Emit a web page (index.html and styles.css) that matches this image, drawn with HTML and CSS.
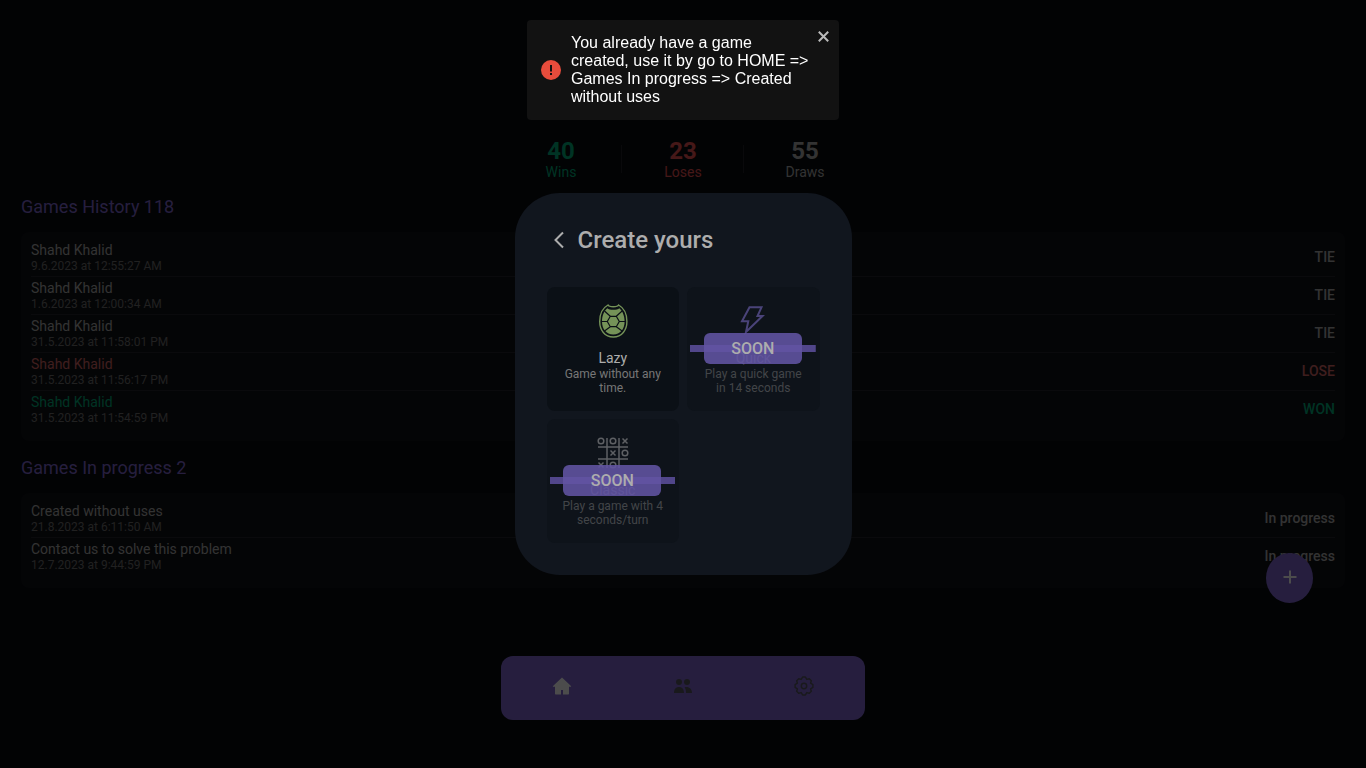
FILE: index.html
```html
<!DOCTYPE html>
<html lang="en">
<head>
<meta charset="utf-8">
<meta name="viewport" content="width=device-width, initial-scale=1">
<title>Home</title>
<link rel="stylesheet" href="styles.css">
</head>
<body>
<main class="page">
<div class="stats">
<div class="stat win"><strong class="stat-value">40</strong><span>Wins</span></div>
<div class="stat lose"><strong class="stat-value">23</strong><span>Loses</span></div>
<div class="stat"><strong class="stat-value">55</strong><span>Draws</span></div>
</div>

<h2 class="section-title">Games History 118</h2>
<ul class="games">
<li class="game"><div><p class="game-name">Shahd Khalid</p><p class="game-date">9.6.2023 at 12:55:27 AM</p></div><span class="game-status">TIE</span></li>
<li class="game"><div><p class="game-name">Shahd Khalid</p><p class="game-date">1.6.2023 at 12:00:34 AM</p></div><span class="game-status">TIE</span></li>
<li class="game"><div><p class="game-name">Shahd Khalid</p><p class="game-date">31.5.2023 at 11:58:01 PM</p></div><span class="game-status">TIE</span></li>
<li class="game lose"><div><p class="game-name">Shahd Khalid</p><p class="game-date">31.5.2023 at 11:56:17 PM</p></div><span class="game-status">LOSE</span></li>
<li class="game win"><div><p class="game-name">Shahd Khalid</p><p class="game-date">31.5.2023 at 11:54:59 PM</p></div><span class="game-status">WON</span></li>
</ul>

<h2 class="section-title">Games In progress 2</h2>
<ul class="games">
<li class="game"><div><p class="game-name">Created without uses</p><p class="game-date">21.8.2023 at 6:11:50 AM</p></div><span class="game-status">In progress</span></li>
<li class="game"><div><p class="game-name">Contact us to solve this problem</p><p class="game-date">12.7.2023 at 9:44:59 PM</p></div><span class="game-status">In progress</span></li>
</ul>
</main>

<button class="add-button" type="button" aria-label="New game">
<svg width="14" height="14" viewBox="0 0 14 14"><path d="M7 .500v13M.500 7h13" stroke="currentColor" stroke-width="2"/></svg>
</button>

<nav class="navbar">
<a class="nav-link active" href="#home" aria-label="Home">
<svg width="24" height="24" viewBox="0 0 24 24" fill="currentColor"><path d="M12 3.5l9 8.4c.3.4.1.9-.4.9H19v7c0 .5-.3.7-.7.7H13V16h-2v4.500H5.700c-.4 0-.7-.2-.7-.7v-7H3.400c-.5 0-.7-.5-.4-.9z"/></svg>
</a>
<a class="nav-link" href="#friends" aria-label="Friends">
<svg width="24" height="24" viewBox="0 0 24 24" fill="currentColor"><circle cx="8" cy="8" r="3"/><circle cx="16" cy="8" r="3"/><path d="M3 19c0-4 2-6 5-6s5 2 5 6zM13.600 13.300c4-1 7.400 1.200 7.400 5.700h-6c0-2.300-.4-4.200-1.400-5.700z"/></svg>
</a>
<a class="nav-link" href="#settings" aria-label="Settings">
<svg width="24" height="24" viewBox="0 0 24 24" fill="none" stroke="currentColor" stroke-width="1.500" stroke-linejoin="round"><path d="M10.600 3.100h2.800l1.400 2.300 2.500-.7 2 2-.7 2.500 2.300 1.400v2.800l-2.300 1.400.7 2.500-2 2-2.500-.7-1.400 2.300h-2.800l-1.400-2.300-2.500.7-2-2 .7-2.500-2.300-1.400v-2.800l2.300-1.400-.7-2.500 2-2 2.500.7z"/><circle cx="12" cy="12" r="2.700"/></svg>
</a>
</nav>

<div class="overlay">
<section class="modal" role="dialog" aria-labelledby="modal-title">
<header class="modal-header">
<button class="back-button" type="button" aria-label="Back">
<svg width="10" height="18" viewBox="0 0 10 18"><path d="M9 1.500L1.500 9 9 16.500" fill="none" stroke="currentColor" stroke-width="2"/></svg>
</button>
<h1 class="modal-title" id="modal-title">Create yours</h1>
</header>
<div class="modes">
<button class="mode" type="button">
<span class="mode-body">
<svg class="mode-icon turtle" width="36" height="36" viewBox="0 0 36 36">
<path d="M13 2C7.500 5 4.700 11.500 4.700 18.500c0 8.500 5 15.500 13.600 15.500s13.600-7 13.600-15.500C31.900 11.500 29.100 5 23.600 2c-1 2.300-9.600 2.300-10.600 0z" fill="none" stroke="currentColor" stroke-width="1.400"/>
<path d="M12.300 5.200C8.800 8 7 13 7 18.500c0 7.500 4.300 13 11.300 13s11.300-5.500 11.300-13c0-5.500-1.800-10.500-5.300-13.300-2 2-10 2-12 0z" fill="currentColor"/>
<path d="M12.300 18.500l3-5.200h6l3 5.200-3 5.200h-6zM15.300 13.300L9.500 8M21.300 13.300L27.100 8M12.300 18.500H6M24.300 18.500h6.300M15.300 23.700L9.500 28M21.300 23.700l5.800 4.300" fill="none" stroke="#0b1016" stroke-width="1.200"/>
</svg>
<span class="mode-name">Lazy</span>
<span class="mode-text">Game without any time.</span>
</span>
</button>
<button class="mode soon" type="button">
<span class="mode-body">
<svg class="mode-icon bolt" width="36" height="36" viewBox="0 0 36 36" fill="none" stroke="currentColor" stroke-width="2"><path d="M14.500 4.300h12l-4 8.700h5L11 29l2.300-10.700H7z"/></svg>
<span class="mode-name">Quick</span>
<span class="mode-text">Play a quick game in 14 seconds</span>
</span>
<span class="ribbon"><span class="ribbon-label">SOON</span></span>
</button>
<button class="mode soon" type="button">
<span class="mode-body">
<svg class="mode-icon" width="36" height="36" viewBox="0 0 36 36" fill="none" stroke="currentColor" stroke-width="1.500"><path d="M12 3v30M24 3v30M3 12h30M3 24h30"/><circle cx="6" cy="6" r="2.800"/><circle cx="18" cy="6" r="2.800"/><circle cx="30" cy="18" r="2.800"/><circle cx="18" cy="30" r="2.800"/><path d="M27.500 3.500l5 5m0-5l-5 5M15.500 15.500l5 5m0-5l-5 5M3.500 27.500l5 5m0-5l-5 5"/></svg>
<span class="mode-name">Classic</span>
<span class="mode-text">Play a game with 4 seconds/turn</span>
</span>
<span class="ribbon"><span class="ribbon-label">SOON</span></span>
</button>
</div>
</section>
</div>

<div class="toast" role="alert">
<svg class="toast-icon" width="20" height="20" viewBox="0 0 20 20"><circle cx="10" cy="10" r="10" fill="#e74c3c"/><path d="M9 5h2v6.500H9zM9 13h2v2H9z" fill="#121212"/></svg>
<p class="toast-text">You already have a game created, use it by go to HOME =&gt; Games In progress =&gt; Created without uses</p>
<button class="toast-close" type="button" aria-label="Close">
<svg width="11" height="11" viewBox="0 0 11 11"><path d="M.800.800l9.400 9.400M10.200.800L.800 10.200" stroke="currentColor" stroke-width="2"/></svg>
</button>
</div>
</body>
</html>
```

FILE: styles.css
```css
* {
  box-sizing: border-box;
}

body {
  margin: 0;
  min-height: 100vh;
  background-color: #080a10;
  color: #aaa;
  font-family: Roboto, sans-serif;
  font-size: 14px;
  line-height: 16px;
}

h1, h2, p, ul {
  margin: 0;
  padding: 0;
}

button {
  padding: 0;
  border: none;
  background: none;
  font-family: inherit;
  color: inherit;
  cursor: pointer;
}

svg {
  display: block;
}

.page {
  padding: 137px 21px 0;
}

.stats {
  display: flex;
  width: 366px;
  margin: 0 auto;
}

.stat {
  flex: 1;
  display: flex;
  flex-direction: column;
  align-items: center;
  line-height: 15px;
  background: linear-gradient(#1f2127, #1f2127) no-repeat right center / 1px 28px;
}

.stat:last-child {
  background: none;
}

.stat-value {
  font-size: 24px;
  line-height: 28px;
}

.win {
  color: #00aa78;
}

.lose {
  color: #e65050;
}

.section-title {
  margin: 16px 0 15px;
  color: #7f67cf;
  font-size: 18px;
  font-weight: 400;
  line-height: 21px;
}

.games {
  padding: 7px 10px 12px;
  border-radius: 8px;
  background-color: #101216;
  list-style: none;
}

.game {
  display: flex;
  justify-content: space-between;
  height: 38px;
  padding-top: 3px;
  border-bottom: 1px solid #22242a;
}

.game:last-child {
  border-bottom-color: transparent;
}

.game.lose {
  color: #d26464;
}

.game-date {
  color: #6e6e6e;
  font-size: 12px;
  line-height: 16px;
}

.game-status {
  font-weight: 500;
  line-height: 30px;
}

.add-button {
  position: fixed;
  right: 53px;
  bottom: 165px;
  display: flex;
  justify-content: center;
  width: 47px;
  height: 50px;
  padding-top: 17px;
  border-radius: 50%;
  background-color: #7f67cf;
  color: #fff;
}

.navbar {
  position: fixed;
  right: 0;
  bottom: 48px;
  left: 0;
  display: flex;
  width: 364px;
  height: 64px;
  margin: 0 auto;
  border-radius: 12px;
  background-color: #7f67cf;
}

.nav-link {
  flex: 1;
  display: flex;
  justify-content: center;
  padding-top: 18px;
  color: #55555f;
}

.nav-link.active {
  color: #fff;
}

.overlay {
  position: fixed;
  inset: 0;
  display: flex;
  justify-content: center;
  align-items: center;
  background-color: rgba(0, 0, 0, 0.7);
}

.modal {
  width: 337px;
  padding: 32px;
  border-radius: 45px;
  background-color: #11161e;
  color: #adadad;
}

.modal-header {
  display: flex;
  align-items: center;
  gap: 14px;
  padding-left: 7px;
}

.modal-title {
  font-size: 24px;
  font-weight: 500;
  line-height: 30px;
}

.modes {
  display: grid;
  grid-template-columns: 1fr 1fr;
  gap: 8px;
  margin-top: 32px;
}

.mode {
  position: relative;
  padding: 16px 12px;
  border-radius: 8px;
  background-color: #0b1016;
}

.mode-body {
  display: flex;
  flex-direction: column;
  align-items: center;
}

.mode-name {
  margin-top: 11px;
  font-size: 14px;
  line-height: 16px;
}

.mode-text {
  margin-top: 1px;
  color: #777;
  font-size: 12px;
  line-height: 14px;
}

.turtle {
  color: #759358;
}

.bolt {
  color: #8674d8;
}

.mode.soon {
  background-color: #0e131a;
}

.soon .mode-body {
  opacity: 0.5;
}

.ribbon {
  position: absolute;
  top: 46px;
  right: 4px;
  left: 3px;
  display: flex;
  justify-content: center;
  background: linear-gradient(#51468a, #51468a) no-repeat center / 100% 7px;
}

.ribbon-label {
  width: 98px;
  border-radius: 6px;
  background-color: rgba(98, 84, 163, 0.88);
  color: #adadad;
  font-size: 16px;
  font-weight: 500;
  line-height: 31px;
}

.toast {
  position: fixed;
  top: 20px;
  right: 0;
  left: 0;
  display: flex;
  align-items: center;
  gap: 10px;
  width: 312px;
  margin: 0 auto;
  padding: 14px 28px 14px 14px;
  border-radius: 4px;
  background-color: #121212;
  color: #fff;
  font-family: "Liberation Sans", sans-serif;
}

.toast-icon {
  flex-shrink: 0;
}

.toast-text {
  font-size: 16px;
  line-height: 18px;
}

.toast-close {
  position: absolute;
  top: 11px;
  right: 10px;
  color: #bbb;
}
```
